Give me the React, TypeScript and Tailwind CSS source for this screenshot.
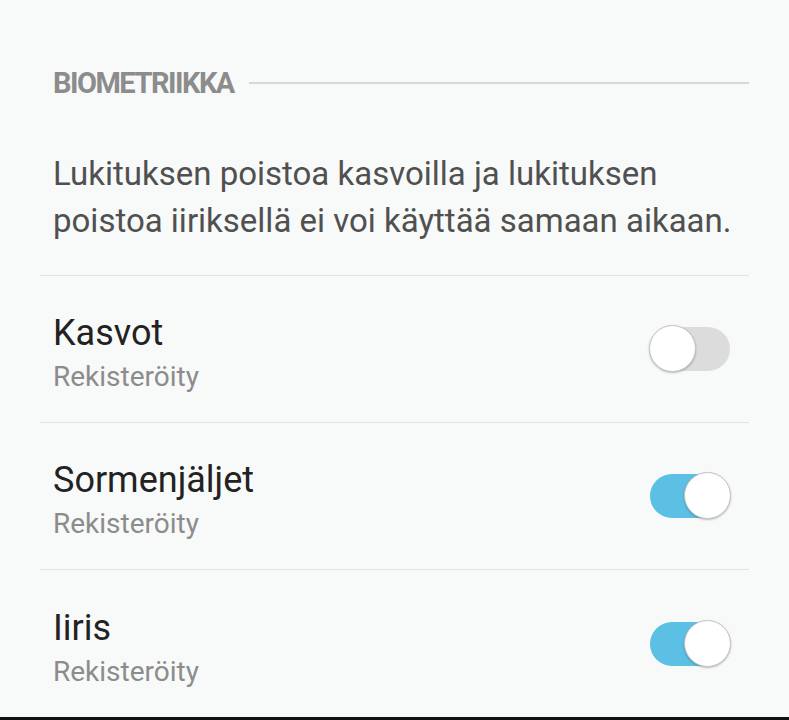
function Toggle({ on }: { on: boolean }) {
  return (
    <div className="relative w-[82px] h-[48px] flex items-center">
      <div
        className={
          on
            ? "w-[80px] h-[44px] rounded-full bg-[#5bc0e4] ml-[1px]"
            : "w-[80px] h-[44px] rounded-full bg-[#dcdcdc] ml-[1px]"
        }
      />
      <div
        className={
          on
            ? "absolute right-0 top-0 w-[47px] h-[47px] rounded-full bg-white border border-[#c4c4c4] shadow-[0_1px_2px_rgba(0,0,0,0.25)]"
            : "absolute left-0 top-0 w-[47px] h-[47px] rounded-full bg-white border border-[#c4c4c4] shadow-[0_1px_2px_rgba(0,0,0,0.25)]"
        }
      />
    </div>
  );
}

function Row({ title, on, last }: { title: string; on: boolean; last?: boolean }) {
  return (
    <div
      className={
        last
          ? "h-[147px] flex items-center justify-between pl-[13px] pr-[18px]"
          : "h-[147px] flex items-center justify-between pl-[13px] pr-[18px] border-b border-[#e2e3e3]"
      }
    >
      <div className="flex flex-col pt-[12px]">
        <div className="text-[36px] leading-[44px] text-[#222222]">{title}</div>
        <div className="text-[28px] leading-[44px] text-[#8c8c8c]">Rekisteröity</div>
      </div>
      <Toggle on={on} />
    </div>
  );
}

export default function App() {
  return (
    <div className="w-[789px] h-[720px] bg-[#f8f9f9] flex flex-col font-['Roboto',_sans-serif] overflow-hidden">
      <div className="flex-1 px-[40px] pt-[66px] flex flex-col">
        <div className="flex items-center pl-[13px] h-[34px]">
          <span className="font-bold text-[29px] tracking-[-1.5px] text-[#8c8c8c] leading-none">
            BIOMETRIIKKA
          </span>
          <div className="flex-1 h-[2px] bg-[#d8d8d8] ml-[15px]" />
        </div>
        <div className="pl-[13px] pt-[50px] pb-[31px] border-b border-[#e2e3e3]">
          <p className="text-[33px] leading-[47px] text-[#505050] whitespace-nowrap">
            Lukituksen poistoa kasvoilla ja lukituksen
            <br />
            poistoa iiriksellä ei voi käyttää samaan aikaan.
          </p>
        </div>
        <Row title="Kasvot" on={false} />
        <Row title="Sormenjäljet" on={true} />
        <Row title="Iiris" on={true} last />
      </div>
      <div className="h-[5px] bg-[#111111]" />
    </div>
  );
}
